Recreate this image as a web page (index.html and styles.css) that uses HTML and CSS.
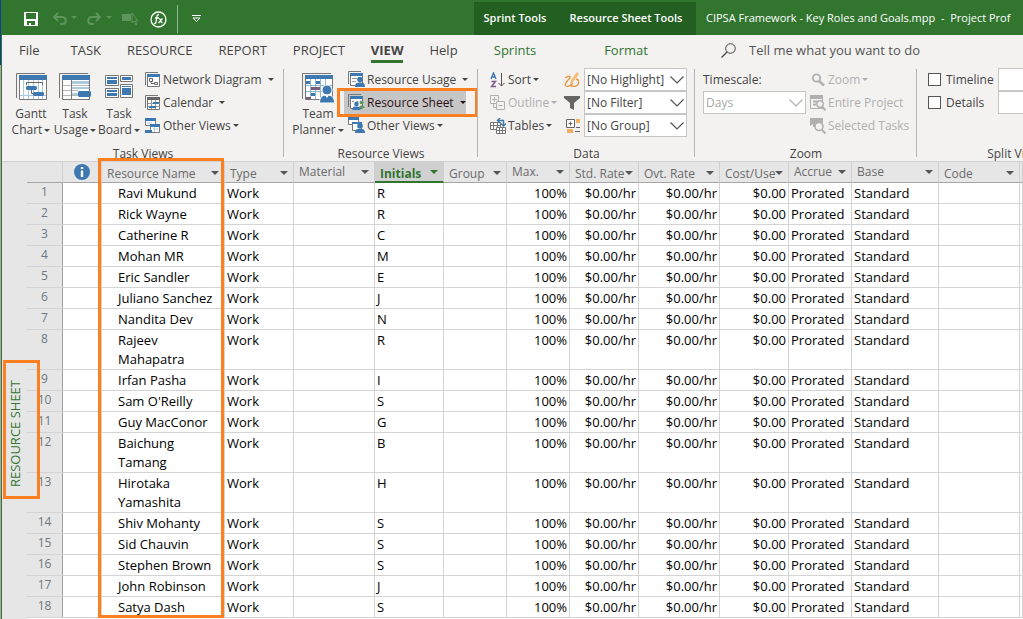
FILE: index.html
```
<!DOCTYPE html>
<html lang="en">
<head>
  <meta charset="UTF-8" />
  <title>CIPSA Framework - Key Roles and Goals.mpp</title>
  <link rel="stylesheet" href="styles.css">
</head>
<body>
  <div class="edge"></div>
  <div class="app">
    <header class="titlebar">
      <div class="quick">
        <button class="qbtn save" aria-label="Save">
          <svg width="14" height="14" viewBox="0 0 14 14"><path d="M0 0h14v14H0z" fill="#fff"/><path d="M2 1h10v6H2zM3 9h8v4H7v-2H5v2H3z" fill="#31752f"/></svg>
        </button>
        <button class="qbtn faded" aria-label="Undo">
          <svg width="25" height="14" viewBox="0 0 25 14"><path d="M6 1L2 5l4 4M2 5h8c5 0 5 7 0 7H8" fill="none" stroke="#6a9d68" stroke-width="2"/><path d="M19 4h6l-3 3z" fill="#6a9d68"/></svg>
        </button>
        <button class="qbtn faded" aria-label="Redo">
          <svg width="25" height="14" viewBox="0 0 25 14"><path d="M9 1l4 4-4 4M13 5H5c-5 0-5 7 0 7h2" fill="none" stroke="#6a9d68" stroke-width="2"/><path d="M19 4h6l-3 3z" fill="#6a9d68"/></svg>
        </button>
        <button class="qbtn faded" aria-label="Select">
          <svg width="16" height="14" viewBox="0 0 16 14"><path d="M0 2h9v7H0z" fill="#6a9d68"/><path d="M10 1v10l2-2 2 4 1-1-2-3h3z" fill="#31752f" stroke="#6a9d68"/></svg>
        </button>
        <button class="qbtn fx" aria-label="Function">
          <svg width="17" height="17" viewBox="0 0 17 17"><circle cx="8.500" cy="8.500" r="7.500" fill="none" stroke="#fff" stroke-width="1.300"/><path d="M9 4c-2-1-2 1-2.500 4S6 13 4 12.500M5 7h4M9 8c2-1 1 4 3.500 3.500M12.500 7.500L8.500 12" fill="none" stroke="#fff" stroke-width="1.300"/></svg>
        </button>
        <span class="qsep"></span>
        <button class="qbtn" aria-label="Customize">
          <svg width="9" height="8" viewBox="0 0 9 8"><path d="M0 .5h9M1 3h7L4.500 6.500z" fill="none" stroke="#fff"/></svg>
        </button>
      </div>
      <span class="tools tools-sprint">Sprint Tools</span>
      <span class="tools tools-sheet">Resource Sheet Tools</span>
      <span class="filename">CIPSA Framework - Key Roles and Goals.mpp&nbsp; -&nbsp; Project Prof</span>
    </header>

    <nav class="tabs">
      <div class="main-tabs">
        <a href="#" class="file">File</a>
        <a href="#">TASK</a>
        <a href="#">RESOURCE</a>
        <a href="#">REPORT</a>
        <a href="#">PROJECT</a>
        <a href="#" class="active">VIEW</a>
        <a href="#">Help</a>
      </div>
      <a href="#" class="context tools-sprint">Sprints</a>
      <a href="#" class="context tools-sheet">Format</a>
      <label class="tell">
        <svg width="15" height="15" viewBox="0 0 15 15"><circle cx="9.500" cy="5.500" r="4.800" fill="none" stroke="#444"/><path d="M6 9L.5 14.500" stroke="#444" stroke-width="1.300"/></svg>
        <input type="text" placeholder="Tell me what you want to do">
      </label>
    </nav>

    <section class="ribbon">
      <div class="group g-task">
        <div class="group-body">
          <button class="big">
            <svg width="31" height="28" viewBox="0 0 31 28"><path d="M.5 25V.5H29" fill="none" stroke="#777"/><path d="M3.500 2.500h27v24h-27z" fill="#fff" stroke="#777"/><path d="M3 2h28v5H3z" fill="#3e78b0"/><path d="M7.500 7v19M12.500 7v19M17.500 7v19M22.500 7v19M26.500 7v19M4 22.500h26" stroke="#a9cbdc"/><path d="M10.500 12V9.500h16V12" fill="none" stroke="#666"/><path d="M11 13h9l1 1v2l-1 1h-9l-1-1v-2zM18 19h9l1 1v2l-1 1h-9l-1-1v-2z" fill="#3e78b0"/><path d="M15.500 17v3.500H17" fill="none" stroke="#666"/></svg>
            <span>Gantt<br>Chart<i class="caret"></i></span>
          </button>
          <button class="big">
            <svg width="32" height="28" viewBox="0 0 32 28"><path d="M.5 25V.5H29" fill="none" stroke="#777"/><path d="M3.500 2.500h27v24h-27z" fill="#fff" stroke="#777"/><path d="M3 2h28v5H3z" fill="#3e78b0"/><path d="M13 8h17v3H13zM13 14h17v2H13zM13 20h6v2h-6z" fill="#a9cbdc"/><path d="M4 12.500h26M4 17.500h15M4 22.500h15" stroke="#b8b8b8"/><path d="M12.500 7v19" stroke="#777"/><path d="M20 18h11l1 1v4l-1 1H20l-1-1v-4z" fill="#3e78b0"/></svg>
            <span>Task<br>Usage<i class="caret"></i></span>
          </button>
          <button class="big">
            <svg width="28" height="28" viewBox="0 0 28 28"><path d="M.5 2.500h13v10H.5zM15.500 2.500h12v6h-12zM.5 15.500h13v9H.5zM15.500 11.500h12v13h-12z" fill="#fff" stroke="#777"/><path d="M2 4h10v2H2zM2 7h10v4H2zM17 4h9v3h-9zM2 17h10v2H2zM2 20h10v3H2zM17 13h9v1h-9zM17 15h9v7h-9z" fill="#3e78b0"/></svg>
            <span>Task<br>Board<i class="caret"></i></span>
          </button>
          <div class="stack">
            <button class="small">
              <svg width="16" height="16" viewBox="0 0 16 16"><path d="M.5 13V.5H13" fill="none" stroke="#777"/><path d="M2.500 2.500h12v12h-12z" fill="#fff" stroke="#777"/><path d="M2 2h13v3H2z" fill="#3e78b0"/><path d="M4.500 6.500h3v3h-3zM9.500 10.500h3v2h-3zM6 9.500v2h3.500" fill="none" stroke="#666"/></svg>
              Network Diagram<i class="caret wide"></i>
            </button>
            <button class="small">
              <svg width="16" height="16" viewBox="0 0 16 16"><path d="M.5 13V.5H13" fill="none" stroke="#777"/><path d="M2.500 2.500h12v12h-12z" fill="#fff" stroke="#777"/><path d="M2 2h13v3H2z" fill="#666"/><path d="M6.500 5v9M10.500 5v9M3 8.500h12M3 11.500h12" stroke="#999"/><path d="M8 7h6v2H8zM4 11h7v2H4z" fill="#3e78b0"/></svg>
              Calendar<i class="caret wide"></i>
            </button>
            <button class="small">
              <svg width="16" height="16" viewBox="0 0 16 16"><path d="M.5.500h10v7H.5z" fill="#fff" stroke="#777"/><path d="M0 0h11v3H0z" fill="#3e78b0"/><path d="M2 5h5" stroke="#a9cbdc"/><path d="M5.500 6.500h9v8h-9z" fill="#fff" stroke="#777"/><path d="M5 6h10v3H5z" fill="#3e78b0"/><path d="M8 11h5M9.500 9v5" stroke="#a9cbdc"/><path d="M0 12h7v3H0z" fill="#3e78b0"/></svg>
              Other Views<i class="caret"></i>
            </button>
          </div>
        </div>
        <div class="group-name">Task Views</div>
      </div>

      <div class="group g-resource">
        <div class="group-body">
          <button class="big">
            <svg width="33" height="31" viewBox="0 0 33 31"><path d="M.5 26V.5H29" fill="none" stroke="#777"/><path d="M3.500 2.500h27v24h-27z" fill="#fff" stroke="#777"/><path d="M3 2h28v4H3z" fill="#3e78b0"/><path d="M8.500 6v20M13.500 6v20M18.500 6v20M23.500 6v20M4 12.500h26M4 18.500h26" stroke="#8fb7d1"/><path d="M4 8h4v3H4zM14 8h4v3h-4zM9 20h4v3H9z" fill="#3e78b0"/><path d="M9 14h9v3H9zM4 24h5v2H4z" fill="#7d5a80"/><circle cx="25" cy="17" r="5" fill="#3e78b0" stroke="#fff"/><path d="M17.500 30c0-6 3-8 7.500-8s7.500 2 7.500 8z" fill="#3e78b0" stroke="#fff"/><path d="M23 22l2 3 2-3z" fill="#fff"/></svg>
            <span>Team<br>Planner<i class="caret"></i></span>
          </button>
          <div class="stack">
            <button class="small">
              <svg width="17" height="17" viewBox="0 0 17 17"><path d="M.5 13V.5H13" fill="none" stroke="#777"/><path d="M2.500 2.500h12v12h-12z" fill="#fff" stroke="#777"/><path d="M2 2h13v3H2z" fill="#3e78b0"/><path d="M4 7.500h5M4 10.500h4" stroke="#999"/><circle cx="12" cy="8.500" r="2.800" fill="#3e78b0"/><path d="M7 16c0-4 2-4.500 5-4.500s5 .5 5 4.500z" fill="#3e78b0"/></svg>
              Resource Usage<i class="caret wide"></i>
            </button>
            <button class="small pressed">
              <svg width="17" height="17" viewBox="0 0 17 17"><path d="M.5 13V.5H13" fill="none" stroke="#777"/><path d="M2.500 2.500h12v12h-12z" fill="#fff" stroke="#777"/><path d="M2 2h13v3H2z" fill="#3e78b0"/><path d="M4 7.500h2M8 7.500h2" stroke="#999"/><circle cx="13.500" cy="8.500" r="2" fill="#5f9a5c"/><path d="M11 14c0-3 5-4 5.500 0z" fill="#5f9a5c"/><circle cx="8.500" cy="10" r="2.300" fill="#3e78b0"/><path d="M4.500 16c0-4 2-3.500 4-3.500s4 0 4 3.500z" fill="#3e78b0"/></svg>
              Resource Sheet<i class="caret wide"></i>
            </button>
            <button class="small">
              <svg width="17" height="17" viewBox="0 0 17 17"><path d="M.5.500h10v7H.5z" fill="#fff" stroke="#777"/><path d="M0 0h11v3H0z" fill="#3e78b0"/><path d="M4.500 5.500h9v8h-9z" fill="#fff" stroke="#777"/><path d="M4 5h10v2H4z" fill="#3e78b0"/><circle cx="12" cy="9" r="2.800" fill="#3e78b0"/><path d="M7 16c0-4 2-4 5-4s5 0 5 4z" fill="#3e78b0"/></svg>
              Other Views<i class="caret"></i>
            </button>
            <span class="mark mark-button"></span>
          </div>
        </div>
        <div class="group-name">Resource Views</div>
      </div>

      <div class="group g-data">
        <div class="group-body">
          <div class="stack">
            <button class="small">
              <svg width="16" height="16" viewBox="0 0 16 16"><path d="M1 7l2.500-6L6 7M2 5h3" fill="none" stroke="#3e78b0" stroke-width="1.400"/><path d="M1.500 9.500h4l-4 5h4.500" fill="none" stroke="#80588a" stroke-width="1.400"/><path d="M11.500 1v13M8.500 11l3 3 3-3" fill="none" stroke="#555"/></svg>
              Sort<i class="caret"></i>
            </button>
            <button class="small" disabled>
              <svg width="16" height="16" viewBox="0 0 16 16"><path d="M.5.500h8v8h-8zM2 4.500h5M4.500 2v5" fill="#f3f2f1" stroke="#b0b0b0"/><path d="M6.500 6.500h8v8h-8zM8.500 10.500h4" fill="#f3f2f1" stroke="#b0b0b0"/><path d="M3.500 9v3.500h3" fill="none" stroke="#b0b0b0"/></svg>
              Outline<i class="caret"></i>
            </button>
            <button class="small">
              <svg width="16" height="16" viewBox="0 0 16 16"><path d="M.5 4.500h10v7H.5zM.5 7.500h10M3.500 4v8M7.500 4v8" fill="#fff" stroke="#777"/><path d="M6.500 9.500h9v6h-9zM6.500 12.500h9M9.500 9v6M12.500 9v6" fill="#fff" stroke="#777"/><path d="M8 2.500h5.500V7M10 0L7.500 2.500 10 5M11 5.500L13.500 8 16 5.500" fill="none" stroke="#3e78b0" stroke-width="1.400"/></svg>
              Tables<i class="caret"></i>
            </button>
          </div>
          <div class="filters">
            <div class="filter">
              <svg width="16" height="16" viewBox="0 0 16 16"><path d="M1 6c4-3 7-2 4 1s-5 6-3 7 5-1 7-3" fill="none" stroke="#e8953c" stroke-width="1.300"/><path d="M6 12l1-4 6-8 2 2-6 8z" fill="#f3bd76"/><path d="M12 7c3 0 4 5 0 7-2 1-5 0-5-1" fill="none" stroke="#e8953c" stroke-width="1.300"/></svg>
              <div class="combo"><select aria-label="Highlight"><option>[No Highlight]</option></select><svg width="14" height="8" viewBox="0 0 14 8"><path d="M.5.500L7 7 13.500.500" fill="none" stroke="#555" stroke-width="1.200"/></svg></div>
            </div>
            <div class="filter">
              <svg width="16" height="16" viewBox="0 0 16 16"><path d="M0 1h16v2l-6 5v7l-4-2V8L0 3z" fill="#666"/></svg>
              <div class="combo"><select aria-label="Filter"><option>[No Filter]</option></select><svg width="14" height="8" viewBox="0 0 14 8"><path d="M.5.500L7 7 13.500.500" fill="none" stroke="#555" stroke-width="1.200"/></svg></div>
            </div>
            <div class="filter">
              <svg width="16" height="16" viewBox="0 0 16 16"><path d="M2.500 1.500h8v8h-8zM4.500 5.500h4M6.500 3.500v4" fill="#fff" stroke="#666"/><path d="M12 1h4v4h-4zM3 11h6v4H3z" fill="#f0b064"/><path d="M12 9.500h4M11 13.500h5" stroke="#666"/></svg>
              <div class="combo"><select aria-label="Group by"><option>[No Group]</option></select><svg width="14" height="8" viewBox="0 0 14 8"><path d="M.5.500L7 7 13.500.500" fill="none" stroke="#555" stroke-width="1.200"/></svg></div>
            </div>
          </div>
        </div>
        <div class="group-name">Data</div>
      </div>

      <div class="group g-zoom">
        <div class="group-body">
          <div class="timescale">
            <label for="timescale">Timescale:</label>
            <div class="combo"><select id="timescale" disabled><option>Days</option></select><svg width="14" height="8" viewBox="0 0 14 8"><path d="M.5.500L7 7 13.500.500" fill="none" stroke="#b0b0b0" stroke-width="1.200"/></svg></div>
          </div>
          <div class="stack">
            <button class="small" disabled>
              <svg width="16" height="16" viewBox="0 0 16 16"><circle cx="6.500" cy="6" r="3.700" fill="none" stroke="#b0b0b0" stroke-width="1.800"/><path d="M9 9l5 4.500" stroke="#b0b0b0" stroke-width="2.500"/></svg>
              Zoom<i class="caret"></i>
            </button>
            <button class="small" disabled>
              <svg width="16" height="16" viewBox="0 0 16 16"><path d="M.5 1.500h12v12H.5z" fill="none" stroke="#b0b0b0"/><path d="M0 0h13v4H0z" fill="#b0b0b0"/><path d="M3 6.500h4M3 9.500h3" stroke="#b0b0b0" stroke-width="2"/><circle cx="10" cy="9" r="3.200" fill="#f3f2f1" stroke="#b0b0b0" stroke-width="1.400"/><path d="M12 11.500l3.500 4" stroke="#b0b0b0" stroke-width="2"/></svg>
              Entire Project
            </button>
            <button class="small" disabled>
              <svg width="16" height="16" viewBox="0 0 16 16"><path d="M0 0h13v5H5v4H3V6L0 8z" fill="#b0b0b0"/><circle cx="9" cy="8.500" r="4" fill="#f3f2f1" stroke="#b0b0b0" stroke-width="1.600"/><path d="M11.500 11.500l4 4" stroke="#b0b0b0" stroke-width="2"/></svg>
              Selected Tasks
            </button>
          </div>
        </div>
        <div class="group-name">Zoom</div>
      </div>

      <div class="group g-split">
        <div class="group-body">
          <div class="checks">
            <label><input type="checkbox">Timeline</label>
            <label><input type="checkbox">Details</label>
          </div>
          <div class="split-combos">
            <div class="combo"><select aria-label="Timeline view"><option></option></select></div>
            <div class="combo"><select aria-label="Details view"><option></option></select></div>
          </div>
        </div>
        <div class="group-name">Split View</div>
      </div>
    </section>

    <main class="workspace">
      <aside class="side">
        <div class="side-label"><span>RESOURCE SHEET</span></div>
      </aside>
      <div class="sheet">
        <table>
          <colgroup>
            <col class="c-num"><col class="c-info"><col class="c-name"><col class="c-type"><col class="c-material"><col class="c-initials"><col class="c-group"><col class="c-max"><col class="c-std"><col class="c-ovt"><col class="c-cost"><col class="c-accrue"><col class="c-base"><col class="c-code"><col>
          </colgroup>
          <thead>
            <tr>
              <th></th>
              <th class="info"><svg width="16" height="16" viewBox="0 0 16 16"><circle cx="8" cy="8" r="8" fill="#3e78b0"/><path d="M6.800 3h2.400v2H6.800zM6.800 6.500h2.400V13H6.800z" fill="#fff"/></svg></th>
              <th><div>Resource Name<i class="caret"></i></div></th>
              <th><div>Type<i class="caret"></i></div></th>
              <th class="raised"><div>Material<i class="caret"></i></div></th>
              <th class="selected"><div>Initials<i class="caret"></i></div></th>
              <th><div>Group<i class="caret"></i></div></th>
              <th class="raised"><div>Max.<i class="caret"></i></div></th>
              <th><div>Std. Rate<i class="caret"></i></div></th>
              <th><div>Ovt. Rate<i class="caret"></i></div></th>
              <th><div>Cost/Use<i class="caret"></i></div></th>
              <th class="raised"><div>Accrue<i class="caret"></i></div></th>
              <th class="raised"><div>Base<i class="caret"></i></div></th>
              <th><div>Code<i class="caret"></i></div></th>
              <th></th>
            </tr>
          </thead>
          <tbody id="rows"></tbody>
        </table>
        <span class="mark mark-column"></span>
      </div>
    </main>
  </div>

  <script>
    const resources = [
      ['Ravi Mukund', 'R'], ['Rick Wayne', 'R'], ['Catherine R', 'C'],
      ['Mohan MR', 'M'], ['Eric Sandler', 'E'], ['Juliano Sanchez', 'J'],
      ['Nandita Dev', 'N'], ['Rajeev<br>Mahapatra', 'R'], ['Irfan Pasha', 'I'],
      ["Sam O'Reilly", 'S'], ['Guy MacConor', 'G'], ['Baichung<br>Tamang', 'B'],
      ['Hirotaka<br>Yamashita', 'H'], ['Shiv Mohanty', 'S'], ['Sid Chauvin', 'S'],
      ['Stephen Brown', 'S'], ['John Robinson', 'J'], ['Satya Dash', 'S']
    ];

    document.getElementById('rows').innerHTML = resources.map(([name, initials], i) => `
      <tr>
        <th scope="row">${i + 1}</th>
        <td></td>
        <td class="name">${name}</td>
        <td>Work</td>
        <td></td>
        <td>${initials}</td>
        <td></td>
        <td class="num">100%</td>
        <td class="num">$0.00/hr</td>
        <td class="num">$0.00/hr</td>
        <td class="num">$0.00</td>
        <td>Prorated</td>
        <td>Standard</td>
        <td></td>
        <td></td>
      </tr>`).join('');
  </script>
</body>
</html>
```
FILE: styles.css
```
* {
  box-sizing: border-box;
}
body {
  margin: 0;
  height: 100vh;
  display: flex;
  overflow: hidden;
  background: #fff;
  color: #444;
  font-family: "Open Sans", "Noto Sans", sans-serif;
  font-size: 12px;
}
button, input, select {
  font: inherit;
  color: inherit;
}
button {
  padding: 0;
  border: none;
  background: none;
}
a {
  color: inherit;
  text-decoration: none;
}
svg {
  display: block;
  flex: none;
}
.edge {
  flex: none;
  width: 1px;
  background: linear-gradient(#0a3f96 65px, #a8a8a8 65px);
}
.app {
  flex: 1;
  min-width: 0;
  display: flex;
  flex-direction: column;
  border-left: 1px solid #31752f;
}

/* Title bar */
.titlebar {
  flex: none;
  display: flex;
  height: 35px;
  background: #31752f;
  color: #fff;
  font-size: 11px;
  line-height: 36px;
  white-space: nowrap;
  overflow: hidden;
}
.quick {
  flex: none;
  width: 472px;
  display: flex;
  align-items: center;
  gap: 10px;
  padding: 3px 0 0 22px;
}
.qbtn.save {
  margin-right: 4px;
}
.qbtn.fx {
  margin-left: 2px;
}
.qbtn.faded {
  opacity: 0.8;
}
.qsep {
  width: 1px;
  height: 28px;
  background: #8fb98d;
}
.qsep + .qbtn {
  margin-left: 4px;
}
.tools-sprint {
  flex: none;
  width: 82px;
  text-align: center;
}
.tools-sheet {
  flex: none;
  width: 140px;
  text-align: center;
}
.tools {
  margin-top: 2px;
  line-height: 32px;
  background: #245f22;
  font-weight: 600;
}
.filename {
  padding-left: 10px;
}

/* Tabs */
.tabs {
  flex: none;
  display: flex;
  height: 32px;
  background: #f3f2f1;
  font-size: 13px;
  line-height: 30px;
}
.main-tabs {
  flex: none;
  width: 472px;
  display: flex;
  gap: 26px;
  padding-left: 17px;
}
.file {
  margin-right: 5px;
}
.active {
  height: 28px;
  font-weight: 700;
  border-bottom: 3px solid #31752f;
}
.context {
  color: #31752f;
}
.tell {
  flex: 1;
  display: flex;
  align-items: center;
  gap: 13px;
  padding: 0 0 2px 25px;
}
.tell input {
  flex: 1;
  min-width: 0;
  padding: 0;
  border: none;
  background: none;
}
.tell input::placeholder {
  color: #555;
}

/* Ribbon */
.ribbon {
  flex: none;
  display: flex;
  height: 95px;
  background: #f3f2f1;
  border-bottom: 1px solid #d0d0d0;
  overflow: hidden;
  white-space: nowrap;
}
.group {
  flex: none;
  position: relative;
  padding-top: 1px;
}
.group::after {
  content: "";
  position: absolute;
  top: 2px;
  right: 0;
  width: 1px;
  height: 88px;
  background: #b4b4b4;
}
.g-task {
  width: 282px;
}
.g-resource {
  width: 194px;
}
.g-data {
  width: 217px;
}
.g-zoom {
  width: 222px;
}
.g-split {
  width: 194px;
}
.group-body {
  display: flex;
  height: 78px;
}
.group-name {
  line-height: 16px;
  text-align: center;
}
.big {
  display: flex;
  flex-direction: column;
  align-items: center;
  justify-content: space-between;
  height: 70px;
  padding-top: 5px;
  line-height: 16px;
}
.g-task .big {
  width: 44px;
}
.g-task .group-body {
  padding-left: 7px;
}
.g-resource .big {
  width: 52px;
}
.g-resource .group-body {
  padding-left: 8px;
}
.g-data .group-body {
  padding-left: 8px;
}
.stack {
  position: relative;
}
.small {
  display: flex;
  align-items: center;
  gap: 2px;
  height: 23px;
  padding-left: 4px;
}
.small:disabled {
  color: #b0b0b0;
}
.small.pressed {
  width: 122px;
  color: #2b1014;
  background: #c6c6c6;
}
.caret {
  display: inline-block;
  flex: none;
  vertical-align: middle;
  border: 3px solid transparent;
  border-top-color: currentColor;
  border-bottom: none;
}
.big .caret {
  margin-left: 2px;
}
.caret.wide {
  margin-left: 4px;
}
.filters {
  margin-left: auto;
  padding-right: 8px;
}
.filter {
  display: flex;
  align-items: center;
  gap: 4px;
}
.combo {
  position: relative;
  width: 103px;
  height: 23px;
}
.combo select {
  appearance: none;
  width: 100%;
  height: 100%;
  padding: 0 2px;
  border: 1px solid #c6c6c6;
  border-radius: 0;
  background: #fff;
  opacity: 1;
}
.combo select:disabled {
  color: #a8a8a8;
}
.combo svg {
  position: absolute;
  top: 8px;
  right: 3px;
  pointer-events: none;
}
.g-zoom .group-body {
  padding-left: 8px;
}
.timescale label {
  display: block;
  line-height: 23px;
}
.g-split .group-body {
  gap: 4px;
  padding-left: 11px;
}
.checks label {
  display: flex;
  align-items: center;
  gap: 5px;
  height: 23px;
}
.checks input {
  appearance: none;
  width: 13px;
  height: 13px;
  margin: 0;
  border: 1px solid #555;
  background: #fff;
}

/* Orange call-outs */
.mark {
  position: absolute;
  border: 3px solid #fd7f20;
  pointer-events: none;
}
.mark-button {
  top: 20px;
  left: -7px;
  width: 141px;
  height: 29px;
}
.mark-column {
  top: -4px;
  left: 71px;
  width: 126px;
  height: 460px;
}

/* Sheet */
.workspace {
  flex: 1;
  min-height: 0;
  display: flex;
}
.side {
  flex: none;
  width: 25px;
  padding: 198px 0 0 1px;
  background: #e6e6e6;
}
.side-label {
  position: relative;
  z-index: 1;
  display: flex;
  align-items: center;
  width: 37px;
  height: 139px;
  padding-top: 8px;
  border: 3px solid #fd7f20;
  color: #31752f;
  font-size: 13px;
  line-height: 18px;
}
.side-label span {
  writing-mode: vertical-rl;
  transform: rotate(180deg);
  white-space: nowrap;
}
.sheet {
  flex: 1;
  min-width: 0;
  position: relative;
}
table {
  width: 100%;
  table-layout: fixed;
  border-collapse: separate;
  border-spacing: 0;
}
.c-num { width: 36px; }
.c-info { width: 39px; }
.c-name { width: 123px; }
.c-type, .c-initials, .c-std, .c-cost { width: 69px; }
.c-material, .c-ovt, .c-code { width: 81px; }
.c-group, .c-max, .c-accrue { width: 63px; }
.c-base { width: 87px; }
thead th {
  height: 21px;
  padding: 0;
  background: #e6e6e6;
  border-right: 1px solid #d0d0d0;
  border-bottom: 1px solid #a6a6a6;
  color: #6a6a6a;
  font-weight: 400;
}
thead th div {
  display: flex;
  align-items: center;
  justify-content: space-between;
  height: 20px;
  padding: 4px 5px 0 5px;
  line-height: 16px;
  white-space: nowrap;
}
thead th.raised div {
  padding-top: 0;
}
thead th.info svg {
  margin: 0 auto;
}
thead .caret {
  margin-bottom: 3px;
  border-width: 4px;
  border-bottom: none;
  color: #555;
}
thead .raised .caret {
  margin-bottom: 0;
}
thead th.selected {
  background: #d0d0d0;
  border-bottom: 2px solid #31752f;
  color: #31752f;
  font-weight: 700;
}
thead th.selected div {
  height: 19px;
}
thead .selected .caret {
  color: #31752f;
}
tbody td {
  padding: 1px 2px 0;
  border-right: 1px solid #d4d4d4;
  border-bottom: 1px solid #d4d4d4;
  background: #fff;
  color: #000;
  font-size: 13px;
  line-height: 19px;
  vertical-align: top;
  white-space: nowrap;
}
tbody td.name {
  padding-left: 16px;
}
tbody td.num {
  text-align: right;
}
tbody th {
  padding: 1px 0 0;
  border-right: 1px solid #a0a0a0;
  border-bottom: 1px solid #d4d4d4;
  background: #e6e6e6;
  color: #6e7880;
  font-weight: 400;
  line-height: 16px;
  vertical-align: top;
}
```
